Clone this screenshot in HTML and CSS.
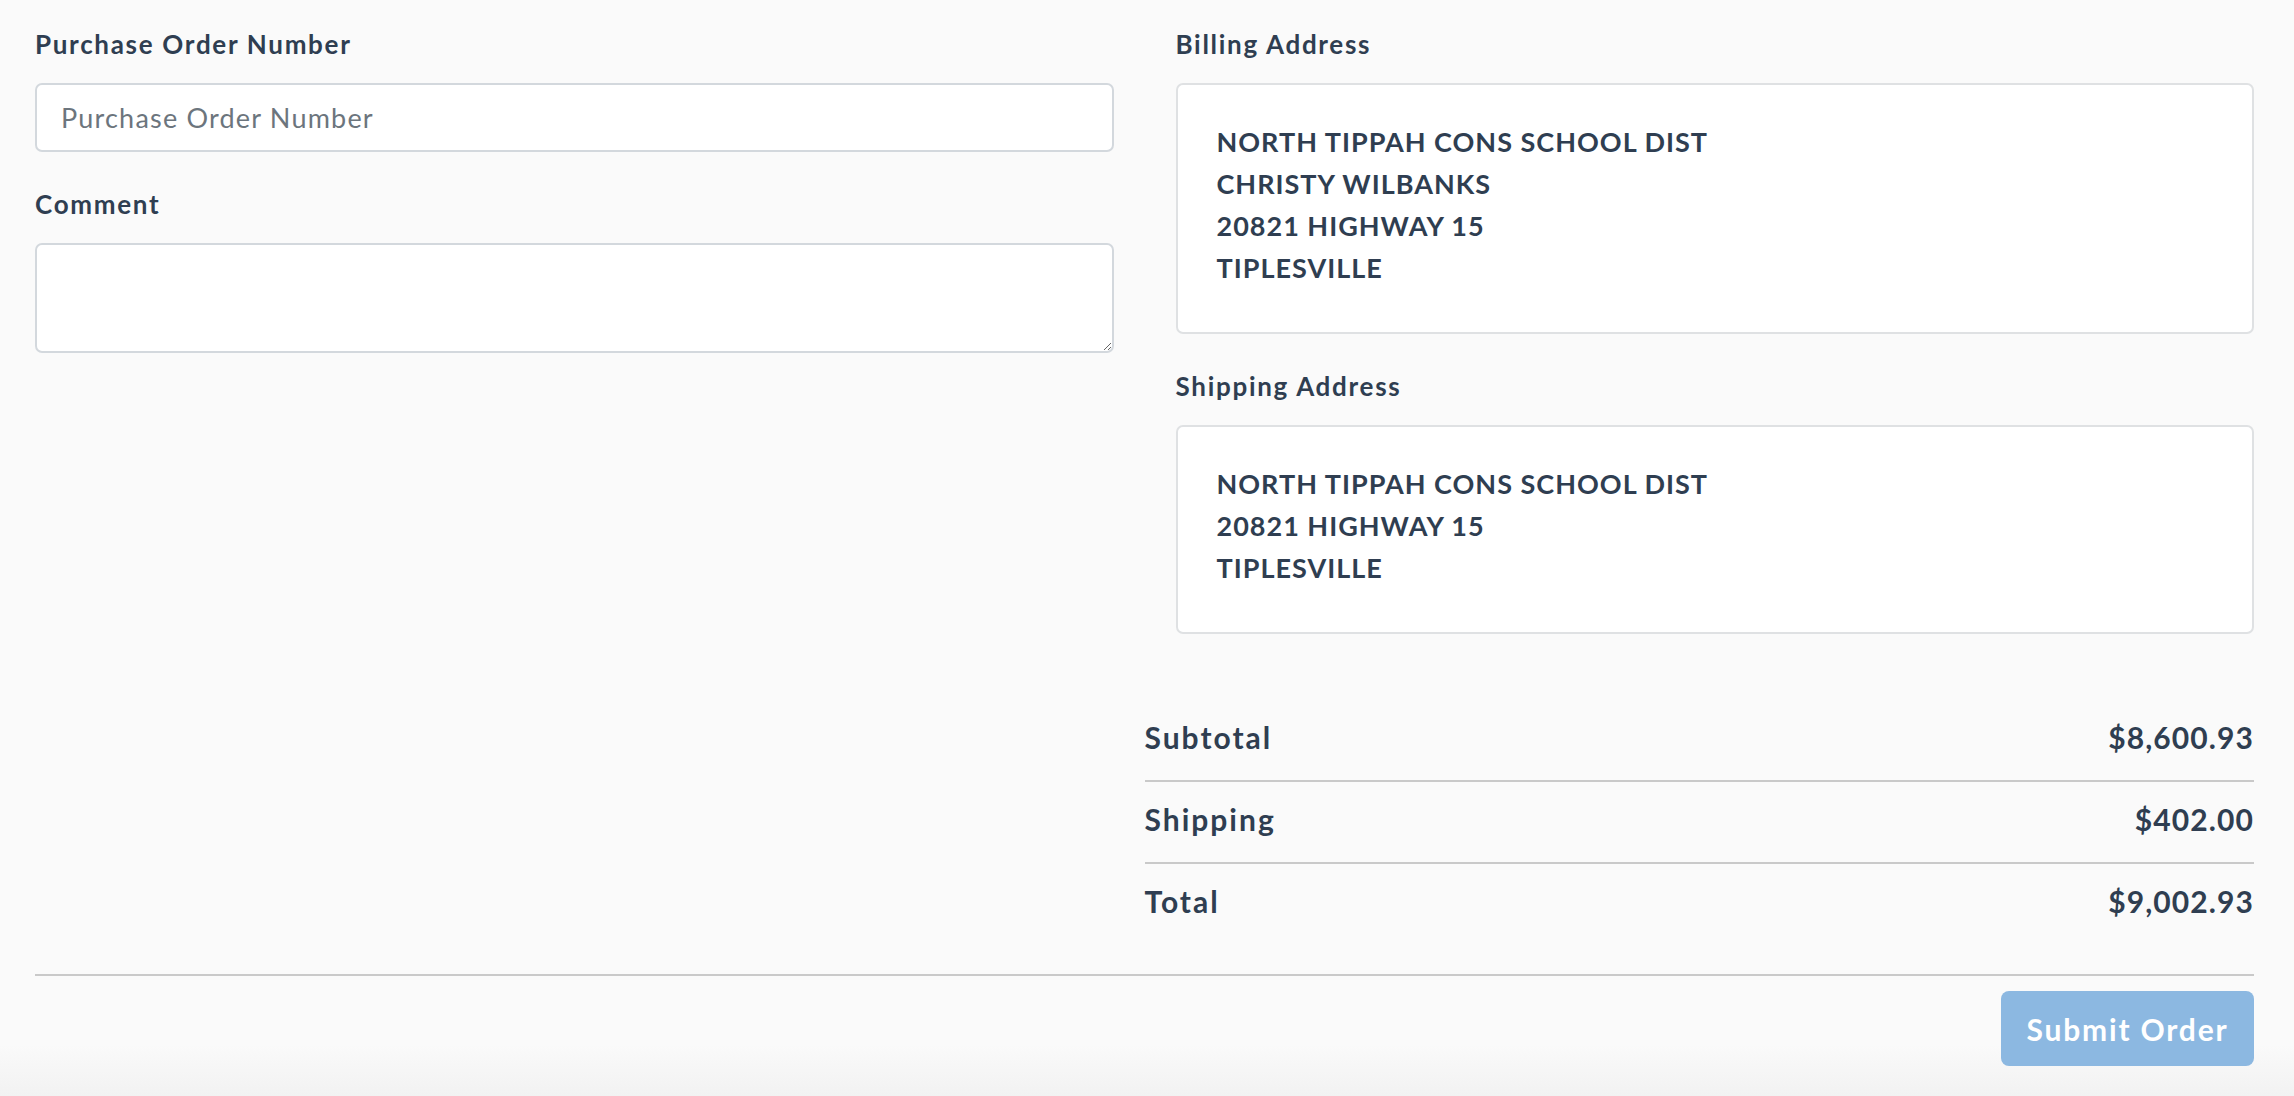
FILE: index.html
```html
<!DOCTYPE html>
<html lang="en">
<head>
<meta charset="utf-8">
<title>Checkout</title>
<link rel="stylesheet" href="styles.css">
</head>
<body>
<main class="checkout">
  <section class="fields">
    <div class="col">
      <label class="label" for="po">Purchase Order Number</label>
      <input class="input" id="po" type="text" placeholder="Purchase Order Number">
      <label class="label label-next" for="comment">Comment</label>
      <textarea class="textarea" id="comment"></textarea>
    </div>
    <div class="col">
      <div class="label">Billing Address</div>
      <div class="address">
        <div>NORTH TIPPAH CONS SCHOOL DIST</div>
        <div>CHRISTY WILBANKS</div>
        <div>20821 HIGHWAY 15</div>
        <div>TIPLESVILLE</div>
      </div>
      <div class="label label-next">Shipping Address</div>
      <div class="address">
        <div>NORTH TIPPAH CONS SCHOOL DIST</div>
        <div>20821 HIGHWAY 15</div>
        <div>TIPLESVILLE</div>
      </div>
    </div>
  </section>
  <section class="summary">
    <div class="totals">
      <div class="row"><span class="row-label">Subtotal</span><span>$8,600.93</span></div>
      <div class="row"><span class="row-label">Shipping</span><span>$402.00</span></div>
      <div class="row"><span class="row-label">Total</span><span>$9,002.93</span></div>
    </div>
  </section>
  <hr class="rule">
  <div class="actions">
    <button class="submit" type="button" disabled>Submit Order</button>
  </div>
</main>
</body>
</html>
```
FILE: styles.css
```css
html {
  background: linear-gradient(to bottom, #fafafa 0, #fafafa 1045px, #f2f2f2 1096px);
  min-height: 1096px;
}
body {
  margin: 0;
  font-family: "Lato", "Liberation Sans", sans-serif;
  color: #2f3e51;
}
.checkout {
  padding: 0 40px 0 35px;
}
.fields {
  display: grid;
  grid-template-columns: 1fr 1fr;
  column-gap: 62px;
  padding-top: 29px;
}
.col {
  display: flex;
  flex-direction: column;
}
.label {
  display: block;
  font-size: 26px;
  line-height: 31px;
  font-weight: 700;
  letter-spacing: 1.7px;
  margin-bottom: 23px;
}
.label-next {
  margin-top: 37px;
}
.input, .textarea {
  box-sizing: border-box;
  width: 100%;
  background: #fff;
  border: 2px solid #d3d8dd;
  border-radius: 7px;
  font-family: "Lato", "Liberation Sans", sans-serif;
  font-size: 27px;
  letter-spacing: 1.2px;
  color: #2f3e51;
  padding: 0 24px;
  margin: 0;
  outline: none;
}
.input {
  height: 69px;
}
.input::placeholder {
  color: #6c757d;
}
.textarea {
  height: 110px;
  padding-top: 14px;
  display: block;
}
.address {
  box-sizing: border-box;
  background: #fff;
  border: 2px solid #dfe1e3;
  border-radius: 7px;
  padding: 36px 40px 43px 39px;
  font-size: 27px;
  line-height: 42px;
  font-weight: 700;
  letter-spacing: 1px;
}
.summary {
  display: grid;
  grid-template-columns: 1fr 1fr;
  column-gap: 62px;
  margin-top: 66px;
}
.totals {
  grid-column: 2;
  margin-left: -31px;
}
.row {
  display: flex;
  justify-content: space-between;
  font-size: 30px;
  line-height: 36px;
  font-weight: 700;
  letter-spacing: 1.1px;
  padding: 19px 0 25px;
  border-bottom: 2px solid #c9c9c9;
}
.row-label {
  letter-spacing: 2px;
}
.row:last-child {
  border-bottom: none;
}
.rule {
  border: none;
  border-top: 2px solid #c9c9c9;
  margin: 30px 0 15px;
}
.actions {
  display: flex;
  justify-content: flex-end;
}
.submit {
  width: 253px;
  height: 75px;
  border: none;
  border-radius: 8px;
  background: #8cb8e1;
  color: #fff;
  font-family: "Lato", "Liberation Sans", sans-serif;
  font-size: 30px;
  font-weight: 700;
  letter-spacing: 1.8px;
  padding: 0;
}
```
